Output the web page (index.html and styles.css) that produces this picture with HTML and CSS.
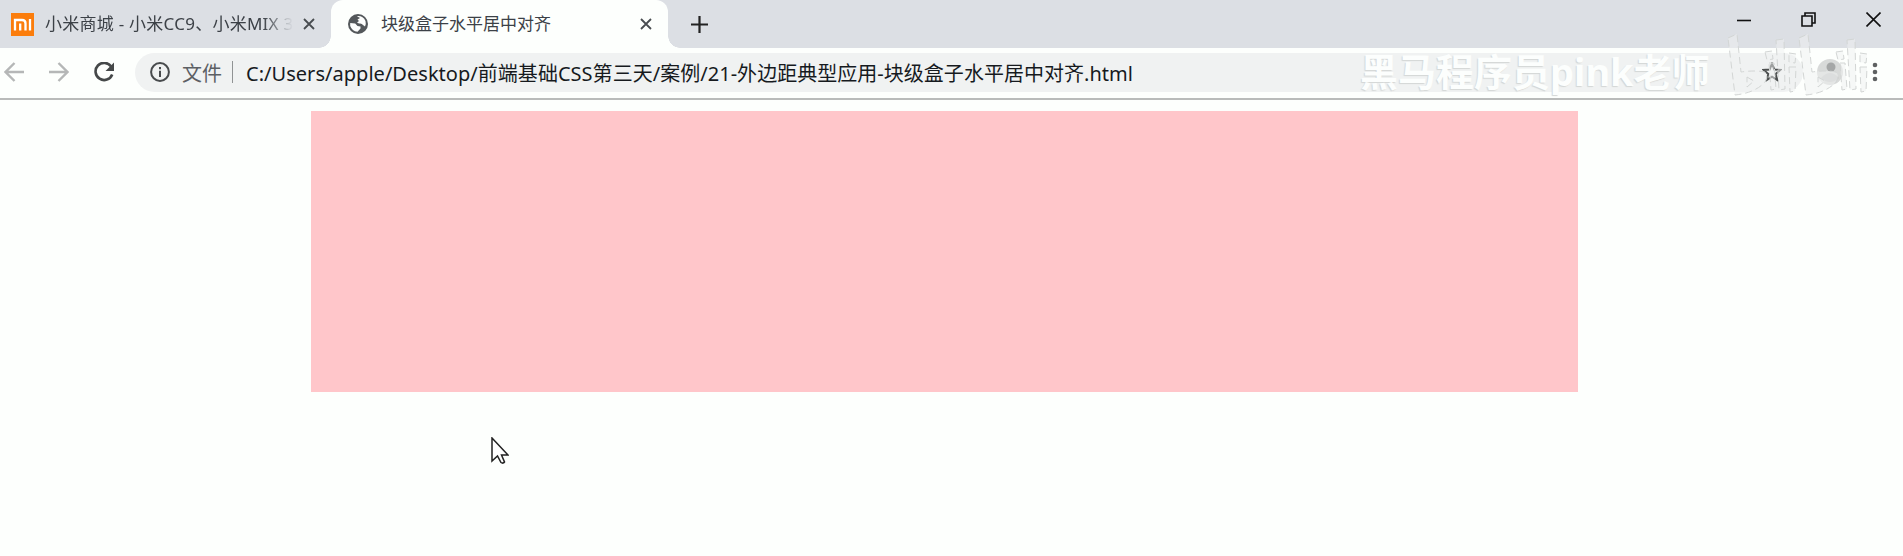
FILE: index.html
```html
<!DOCTYPE html>
<html lang="zh-CN">
<head>
<meta charset="utf-8">
<title>块级盒子水平居中对齐</title>
<link rel="stylesheet" href="styles.css">
</head>
<body>
<header class="tabstrip">
  <div class="tab">
    <svg class="favicon-mi" viewBox="0 0 23 23"><rect width="23" height="23" fill="#fb7d0c"/><path d="M4 17.500V7h7q3.500 0 3.500 3.500v7M9.200 10.500v7M19 6v11.500" fill="none" stroke="#fff" stroke-width="2.300"/></svg>
    <span class="tab-title tab-title-fade">小米商城 - 小米CC9、小米MIX 3</span>
    <svg class="tab-close" viewBox="0 0 12 12"><path d="M1 1l10 10M11 1L1 11"/></svg>
  </div>
  <div class="tab tab-active">
    <svg class="favicon-globe" viewBox="0 0 20 20"><circle cx="10" cy="10" r="10" fill="#54585b"/><path d="M9 2.200C12 1.500 16 3 17.500 7q.8 3-.5 5.500l-2-1.500q-1-2-4-1.500L9 8.500 11 7 9.500 5.500 12 4zM2.200 9l5 .5 2.300 2.500 3 .5v2l-3 3.300Q4 17 2.200 12z" fill="#fdfefd"/></svg>
    <span class="tab-title">块级盒子水平居中对齐</span>
    <svg class="tab-close" viewBox="0 0 12 12"><path d="M1 1l10 10M11 1L1 11"/></svg>
  </div>
  <svg class="new-tab" viewBox="0 0 17 17"><path d="M8.500 0v17M0 8.500h17"/></svg>
  <div class="window-controls">
    <svg width="14" height="14" viewBox="0 0 14 14"><path d="M0 7.500h14"/></svg>
    <svg width="15" height="15" viewBox="0 0 15 15"><path d="M1 4h10v10H1zM4 4V1h10v10h-3"/></svg>
    <svg width="15" height="15" viewBox="0 0 15 15"><path d="M.5.500l14 14M14.500.5l-14 14"/></svg>
  </div>
</header>
<nav class="toolbar">
  <svg class="nav-icon" viewBox="0 0 20 20"><path d="M20 10H1.500M10.500 1L1.500 10l9 9"/></svg>
  <svg class="nav-icon" viewBox="0 0 20 20"><path d="M0 10h18.500M9.500 1l9 9-9 9"/></svg>
  <svg class="nav-icon nav-reload" viewBox="0 0 20 20"><path d="M17.200 4.500A8.600 8.600 0 1 0 18.200 12.500"/><path class="solid" d="M20 .5V9h-8.500z"/></svg>
  <div class="omnibox">
    <svg class="info" viewBox="0 0 20 20"><circle cx="10" cy="10" r="8.900"/><path d="M10 8.800V15M10 5v2.200"/></svg>
    <span class="scheme">文件</span>
    <span class="divider"></span>
    <span class="url">C:/Users/apple/Desktop/前端基础CSS第三天/案例/21-外边距典型应用-块级盒子水平居中对齐.html</span>
    <svg class="star" viewBox="0 0 18 18"><path d="M9 1.500l2.100 5.200 5.400.4-4.100 3.600 1.300 5.500L9 13.200l-4.700 3 1.300-5.500L1.500 7.100l5.400-.4z"/></svg>
  </div>
  <svg class="avatar" viewBox="0 0 26 26"><circle cx="13" cy="13" r="13" fill="#d8dad9"/><circle cx="14" cy="8" r="4.500" fill="#a5a7a7"/><path d="M4 19q9-10 18 0-9 8-18 0" fill="#c9cbca"/></svg>
  <svg class="menu" viewBox="0 0 6 20"><circle cx="3" cy="3" r="2.300"/><circle cx="3" cy="10" r="2.300"/><circle cx="3" cy="17" r="2.300"/></svg>
</nav>
<main class="page"><div class="box"></div></main>
<div class="watermark">黑马程序员pink老师</div>
<svg class="watermark-logo" viewBox="0 0 142 64">
  <g id="half"><path d="M1 5l9-4 4 38q14-2 24 0 4 4 0 10-10 11-30 13z"/><path d="M20 44l7 4-7 6z"/><path d="M49 7l8-1 1 50-6 1zM38 19l7-1 1 8-6 1zM42 30h5l2 26-5 1zM62 20l7 1-1 9-6-1zM62 34h7l-1 24-5 1z"/></g>
  <use href="#half" x="71"/>
</svg>
<svg class="cursor" viewBox="0 0 18 28"><path d="M1 1v23l5.500-5 3.500 6.500q2 1.500 3.500-.5L10.500 18H17z"/></svg>
</body>
</html>
```
FILE: styles.css
```css
* { box-sizing: border-box; }
body {
  margin: 0;
  height: 556px;
  overflow: hidden;
  background: #fdfffd;
  font-family: "Noto Sans", "Noto Sans CJK SC", sans-serif;
}
svg { display: block; flex: none; }
.tabstrip { display: flex; align-items: center; height: 48px; background: #dcdfe4; }
.tab { display: flex; align-items: center; width: 331px; height: 48px; padding: 0 16px 0 11px; }
.tab-active {
  position: relative;
  width: 337px;
  padding: 0 16px 0 17px;
  background: #fdfffd;
  border-radius: 12px 12px 0 0;
}
.tab-active::before, .tab-active::after {
  content: "";
  position: absolute;
  bottom: 0;
  width: 12px;
  height: 12px;
}
.tab-active::before { left: -12px; background: radial-gradient(circle at 0 0, transparent 11.5px, #fdfffd 12px); }
.tab-active::after { right: -12px; background: radial-gradient(circle at 100% 0, transparent 11.5px, #fdfffd 12px); }
.favicon-mi { width: 23px; height: 23px; }
.favicon-globe { width: 20px; height: 20px; }
.tab-title {
  flex: 1;
  margin-left: 11px;
  overflow: hidden;
  white-space: nowrap;
  font-size: 17px;
  line-height: 28px;
  color: #3c4147;
}
.tab-active .tab-title { margin-left: 13px; }
.tab-title-fade {
  flex: none;
  width: 248px;
  letter-spacing: .25px;
  -webkit-mask-image: linear-gradient(to right, #000 88%, transparent);
  mask-image: linear-gradient(to right, #000 88%, transparent);
}
.tab-close { width: 12px; height: 12px; margin-left: auto; fill: none; stroke: #484c50; stroke-width: 1.8; }
.new-tab { width: 17px; height: 17px; margin-left: 23px; fill: none; stroke: #222; stroke-width: 2.2; }
.window-controls {
  display: flex;
  align-items: center;
  gap: 50px;
  margin: 0 22px 9px auto;
  fill: none;
  stroke: #111;
  stroke-width: 1.6;
}
.toolbar {
  display: flex;
  align-items: center;
  height: 52px;
  padding: 0 25px 2px 4px;
  border-bottom: 2px solid #b9bbba;
}
.nav-icon { width: 20px; height: 20px; margin-right: 25px; fill: none; stroke: #b5b7b7; stroke-width: 2.4; }
.nav-reload { margin-right: 21px; stroke: #454849; stroke-width: 2.6; }
.solid { fill: #454849; stroke: none; }
.omnibox {
  display: flex;
  align-items: center;
  flex: 1;
  height: 39px;
  padding: 0 21px 0 15px;
  border-radius: 20px;
  background: #f0f2f2;
  white-space: nowrap;
}
.info { width: 20px; height: 20px; fill: none; stroke: #484b4d; stroke-width: 2; }
.scheme { margin-left: 12px; font-size: 20px; color: #5c6064; }
.divider { width: 1px; height: 22px; margin: 0 13px 0 10px; background: #909394; }
.url { font-size: 20px; letter-spacing: .03px; color: #161a1e; }
.star { width: 20px; height: 20px; margin-left: auto; fill: none; stroke: #4c4f4f; stroke-width: 1.8; }
.avatar { width: 26px; height: 26px; margin-left: 14px; }
.menu { width: 6px; height: 20px; margin-left: 29px; fill: #5f6162; }
.page { padding: 11px 325px 0 311px; }
.box { height: 281px; background: #ffc6ca; }
.watermark {
  position: absolute;
  left: 1360px;
  top: 45px;
  font-size: 38px;
  line-height: 52px;
  font-weight: 700;
  white-space: nowrap;
  color: #fcfefd;
  text-shadow: -1px 1px 1px #d3d6d5;
}
.watermark-logo {
  position: absolute;
  left: 1727px;
  top: 33px;
  width: 142px;
  height: 64px;
  fill: rgba(240, 242, 241, .5);
  stroke: #d3d6d5;
  stroke-width: 1;
  stroke-dasharray: 7 4;
}
.cursor {
  position: absolute;
  left: 491px;
  top: 437px;
  width: 18px;
  height: 28px;
  fill: #fff;
  stroke: #222;
  stroke-width: 1.5;
}
```
